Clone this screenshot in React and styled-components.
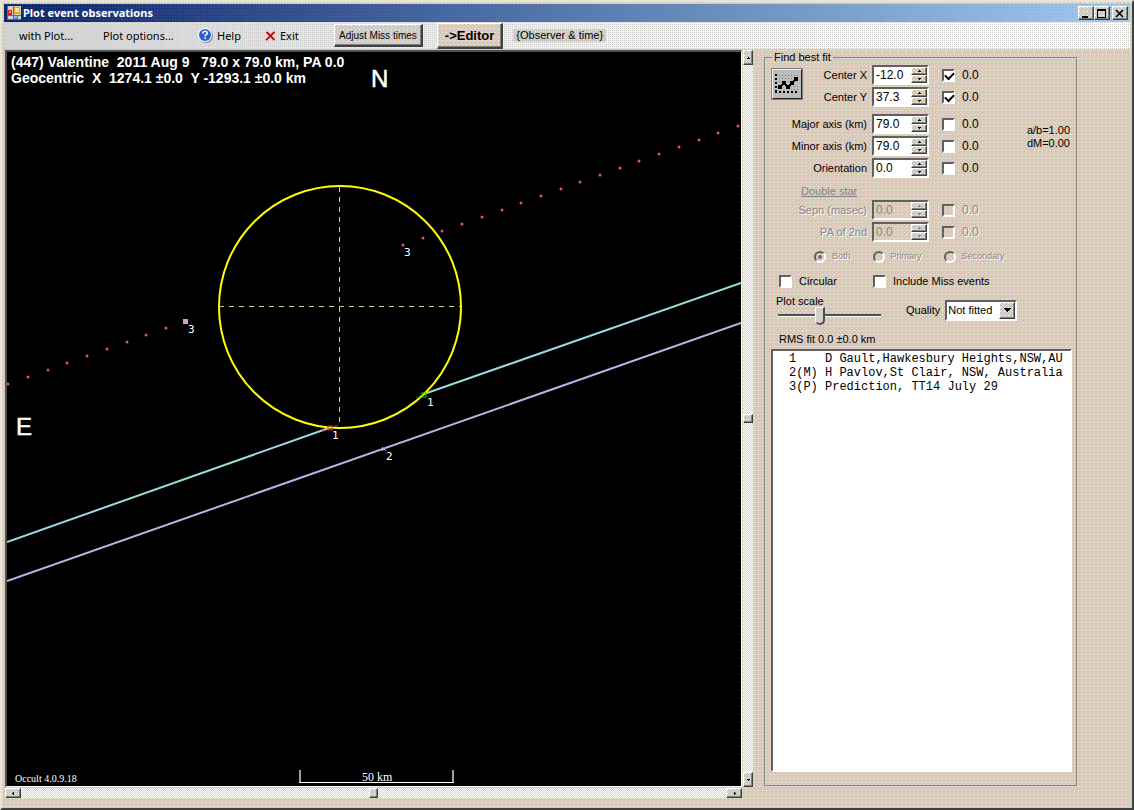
import React, { useState } from 'react';
import styled, { createGlobalStyle, css } from 'styled-components';

const observers = [
  '1    D Gault,Hawkesbury Heights,NSW,AU',
  '2(M) H Pavlov,St Clair, NSW, Australia',
  '3(P) Prediction, TT14 July 29',
];

const centerFields = [
  { id: 'centerX', label: 'Center X', value: '-12.0', checked: true },
  { id: 'centerY', label: 'Center Y', value: '37.3', checked: true },
];

const axisFields = [
  { id: 'major', label: 'Major axis (km)', value: '79.0' },
  { id: 'minor', label: 'Minor axis (km)', value: '79.0' },
  { id: 'orientation', label: 'Orientation', value: '0.0' },
];

const doubleFields = [
  { id: 'sepn', label: 'Sepn (masec)', value: '0.0', disabled: true },
  { id: 'pa', label: 'PA of 2nd', value: '0.0', disabled: true },
];

const dotsAlong = (x1, y1, x2, y2, steps) =>
  Array.from({ length: steps + 1 }, (_, i) => ({
    x: Math.round(x1 + ((x2 - x1) * i) / steps),
    y: Math.round(y1 + ((y2 - y1) * i) / steps),
  }));

const predictionDots = [...dotsAlong(403, 245, 738, 126, 17), ...dotsAlong(8, 384, 166, 328, 8)];

const FormIcon = () => (
  <svg width="14" height="14" viewBox="0 0 14 14" shapeRendering="crispEdges" aria-hidden="true">
    <rect width="14" height="14" fill="#d4d0c8" />
    <path d="M0 0h1v14h-1zM0 13h14v1h-14zM6 0h1v14h-1zM0 9h14v1h-14z" fill="#5a6a9a" />
    <rect x="1" y="4" width="4" height="5" fill="#cc2222" />
    <rect x="2" y="5" width="2" height="2" fill="#ff8877" />
    <rect x="7" y="1" width="6" height="7" fill="#e8a41c" />
    <rect x="8" y="2" width="4" height="4" fill="#ffe27a" />
    <rect x="6" y="9" width="5" height="4" fill="#3c78dc" />
    <rect x="7" y="10" width="3" height="2" fill="#8cbcff" />
  </svg>
);

const HelpIcon = () => (
  <svg width="15" height="15" viewBox="0 0 15 15" aria-hidden="true">
    <circle cx="8" cy="8" r="7" fill="#8a8a94" />
    <circle cx="7" cy="7" r="7" fill="#ffffff" />
    <circle cx="7" cy="7" r="6" fill="#2a5fd0" />
    <path d="M4.8 5.4c0-1.4 1-2.1 2.2-2.1s2.2.7 2.2 1.9c0 1.4-2 1.4-2 3" fill="none" stroke="#fff" strokeWidth="1.5" />
    <rect x="6.4" y="9.4" width="1.6" height="1.6" fill="#fff" />
  </svg>
);

const ExitIcon = () => (
  <svg width="11" height="10" viewBox="0 0 11 10" aria-hidden="true">
    <path d="M1.5 1l8 8M9.5 .8l-8.4 8.4" fill="none" stroke="#cc0000" strokeWidth="1.8" />
  </svg>
);

const FitIcon = () => (
  <svg width="28" height="28" viewBox="0 0 28 28" shapeRendering="crispEdges" aria-hidden="true">
    <path d="M3 4v18" stroke="#000" strokeWidth="2" strokeDasharray="2 2" />
    <path d="M2 22h23" stroke="#000" strokeWidth="2" strokeDasharray="2 2" />
    <path d="M6 5.5h19M6 8.5h15M6 11.5h10M18 16.5h7M18 19.5h7" stroke="#808080" strokeDasharray="1 2" />
    <path d="M5 15h4v4h-4zM9 11h4v4h-4zM13 15h4v4h-4zM17 11h4v4h-4zM21 7h4v4h-4z" fill="#000" />
    <path d="M8 14h2v2h-2zM12 14h2v2h-2zM16 14h2v2h-2zM20 10h2v2h-2z" fill="#000" />
  </svg>
);

const Arrow = ({ dir }) => {
  const paths = {
    up: 'M2 0h1v1h1v1h-3v-1h1z',
    down: 'M1 0h3v1h-1v1h-1v-1h-1z',
    left: 'M1 2h1v-1h1v3h-1v-1h-1z',
    right: 'M4 2h-1v-1h-1v3h1v-1h1z',
  };
  const flat = dir === 'up' || dir === 'down';
  return (
    <svg width="5" height={flat ? 2 : 5} viewBox={`0 0 5 ${flat ? 2 : 5}`} shapeRendering="crispEdges" aria-hidden="true">
      <path d={paths[dir]} fill="currentColor" />
    </svg>
  );
};

const Scroller = ({ vertical }) => (
  <ScrollTrack $vertical={vertical}>
    <ScrollButton $vertical={vertical} aria-label={vertical ? 'Scroll up' : 'Scroll left'}>
      <Arrow dir={vertical ? 'up' : 'left'} />
    </ScrollButton>
    <ScrollThumb />
    <ScrollButton $vertical={vertical} aria-label={vertical ? 'Scroll down' : 'Scroll right'}>
      <Arrow dir={vertical ? 'down' : 'right'} />
    </ScrollButton>
  </ScrollTrack>
);

const PlotChart = () => (
  <Chart viewBox="7 52 734 734" role="img" aria-label="Occultation plot">
    <text className="title" x="11" y="67">
      {'(447) Valentine  2011 Aug 9   79.0 x 79.0 km, PA 0.0'}
    </text>
    <text className="title" x="11" y="83">
      {'Geocentric  X  1274.1 ±0.0  Y -1293.1 ±0.0 km'}
    </text>
    <text className="compass" x="371" y="87">N</text>
    <text className="compass" x="16" y="435">E</text>

    {predictionDots.map(({ x, y }) => (
      <circle key={`${x}-${y}`} cx={x} cy={y} r="1.5" fill="#d6508c" />
    ))}
    <rect x="183" y="319" width="5" height="5" fill="#d39ad8" />

    <path d="M339 187V428M219 306H461" stroke="#d8cf80" strokeDasharray="5 5" shapeRendering="crispEdges" />
    <path d="M7 542L329 428M424 394L741 283" stroke="#9cd8dc" strokeWidth="2" />
    <path d="M7 581L741 323" stroke="#b0b8e6" strokeWidth="2" />
    <circle cx="340" cy="307" r="121" fill="none" stroke="#ffff00" strokeWidth="2" />
    <rect x="328" y="426" width="4" height="4" fill="none" stroke="#e03030" />
    <path d="M322 431h3M334 426l4-1" stroke="#e00000" />
    <rect x="422" y="393" width="4" height="4" fill="none" stroke="#00d000" />
    <path d="M416 397h4" stroke="#008800" />
    <path d="M382 447l4 4M386 447l-4 4" stroke="#b0b8e6" />

    <text className="chord" x="404" y="256">3</text>
    <text className="chord" x="188" y="333">3</text>
    <text className="chord" x="427" y="406">1</text>
    <text className="chord" x="332" y="439">1</text>
    <text className="chord" x="386" y="460">2</text>

    <text className="version" x="15" y="782">Occult 4.0.9.18</text>
    <path d="M300 770V782M453 770V782" stroke="#a0a0a0" strokeWidth="2" />
    <path d="M299 782.5H454" stroke="#ffffff" shapeRendering="crispEdges" />
    <text className="scale" x="362" y="781">50 km</text>
  </Chart>
);

const FieldRow = ({ field, labelWidth }) => {
  const [value, setValue] = useState(field.value);
  const [checked, setChecked] = useState(Boolean(field.checked));
  const { id, label, disabled } = field;

  const step = (delta) => setValue((v) => (Number(v) + delta).toFixed(1));

  return (
    <Row>
      <RowLabel htmlFor={id} $width={labelWidth} $disabled={disabled}>
        {label}
      </RowLabel>
      <Spinner>
        <input id={id} type="text" value={value} disabled={disabled} onChange={(e) => setValue(e.target.value)} />
        <div className="steps">
          <button type="button" aria-label={`${label} up`} disabled={disabled} onClick={() => step(0.1)}>
            <Arrow dir="up" />
          </button>
          <button type="button" aria-label={`${label} down`} disabled={disabled} onClick={() => step(-0.1)}>
            <Arrow dir="down" />
          </button>
        </div>
      </Spinner>
      <CheckLabel $disabled={disabled}>
        <CheckBox type="checkbox" checked={checked} disabled={disabled} onChange={() => setChecked(!checked)} />
        0.0
      </CheckLabel>
    </Row>
  );
};

const FitPanel = () => (
  <Panel>
    <legend>Find best fit</legend>
    <Block>
      <FitButton type="button" aria-label="Find best fit">
        <FitIcon />
      </FitButton>
      <Rows>
        {centerFields.map((field) => (
          <FieldRow key={field.id} field={field} labelWidth={64} />
        ))}
      </Rows>
    </Block>

    <Block $top={7}>
      <Rows>
        {axisFields.map((field) => (
          <FieldRow key={field.id} field={field} labelWidth={96} />
        ))}
      </Rows>
      <Notes>
        a/b=1.00
        <br />
        dM=0.00
      </Notes>
    </Block>

    <DoubleTitle>Double star</DoubleTitle>
    <Rows>
      {doubleFields.map((field) => (
        <FieldRow key={field.id} field={field} labelWidth={96} />
      ))}
    </Rows>

    <RadioRow>
      {['Both', 'Primary', 'Secondary'].map((name) => (
        <label key={name}>
          <Radio type="radio" name="star" disabled defaultChecked={name === 'Both'} />
          {name}
        </label>
      ))}
    </RadioRow>

    <OptionRow>
      <label>
        <CheckBox type="checkbox" />
        Circular
      </label>
      <label>
        <CheckBox type="checkbox" />
        Include Miss events
      </label>
    </OptionRow>

    <ScaleRow>
      <PlotScale>
        <label htmlFor="scale">Plot scale</label>
        <input id="scale" type="range" min="0" max="100" defaultValue="40" />
      </PlotScale>
      <label htmlFor="quality">Quality</label>
      <SelectBox>
        <select id="quality" defaultValue="Not fitted">
          <option>Not fitted</option>
        </select>
        <span className="drop">
          <svg width="7" height="4" viewBox="0 0 7 4" shapeRendering="crispEdges" aria-hidden="true">
            <path d="M0 0h7v1h-1v1h-1v1h-1v1h-1v-1h-1v-1h-1v-1h-1z" fill="#000" />
          </svg>
        </span>
      </SelectBox>
    </ScaleRow>

    <Rms>RMS fit 0.0 ±0.0 km</Rms>
    <ObserverList>
      {observers.map((line) => (
        <li key={line}>{line}</li>
      ))}
    </ObserverList>
  </Panel>
);

const App = () => {
  return (
    <>
      <GlobalStyle />
      <Window>
        <TitleBar>
          <FormIcon />
          <h1>Plot event observations</h1>
          <TitleButton type="button" aria-label="Minimize">
            <svg width="10" height="9" shapeRendering="crispEdges"><path d="M1 7h6v2h-6z" /></svg>
          </TitleButton>
          <TitleButton type="button" aria-label="Maximize">
            <svg width="10" height="9" shapeRendering="crispEdges">
              <path d="M0 0h9v9h-9zM1 2v6h7v-6z" fillRule="evenodd" />
            </svg>
          </TitleButton>
          <TitleButton type="button" aria-label="Close" $gap>
            <svg width="10" height="9"><path d="M1 1l7 7M8 1l-7 7" stroke="#000" strokeWidth="1.6" /></svg>
          </TitleButton>
        </TitleBar>

        <MenuBar>
          <MenuItem type="button" $width={84}>with Plot...</MenuItem>
          <MenuItem type="button" $width={95}>Plot options...</MenuItem>
          <MenuItem type="button" $width={67}>
            <HelpIcon />
            Help
          </MenuItem>
          <MenuItem type="button" $width={69}>
            <ExitIcon />
            Exit
          </MenuItem>
          <RaisedButton type="button">Adjust Miss times</RaisedButton>
          <RaisedButton type="button" $strong>
            {'->Editor'}
          </RaisedButton>
          <MenuNote>{'{Observer & time}'}</MenuNote>
        </MenuBar>

        <Body>
          <PlotArea>
            <PlotFrame>
              <PlotChart />
            </PlotFrame>
            <Scroller vertical />
            <Scroller />
          </PlotArea>
          <FitPanel />
        </Body>
      </Window>
    </>
  );
};

export default App;

const dither = css`
  background-color: #cecbc6;
  background-image: conic-gradient(at 1px 1px, transparent 270deg, #ffffcc 270deg),
    conic-gradient(at 1px 1px, transparent 270deg, #ffcccc 270deg);
  background-size: 4px 4px;
  background-position: 0 0, 2px 2px;
`;

const raised = css`
  border: 1px solid;
  border-color: #ffffff #404040 #404040 #ffffff;
  box-shadow: inset -1px -1px #808080;
`;

const sunken = css`
  border: 2px solid;
  border-color: #606060 #ffffff #ffffff #606060;
`;

const disabledText = css`
  color: #858585;
  text-shadow: 1px 1px #ffffff;
`;

const GlobalStyle = createGlobalStyle`
  * {
    box-sizing: border-box;
  }

  body {
    margin: 0;
    font-family: "Liberation Sans", Arial, sans-serif;
    font-size: 11px;
    line-height: 13px;
    color: #000000;
  }

  button, input, select {
    font: inherit;
    color: inherit;
    margin: 0;
    padding: 0;
    border-radius: 0;
  }
`;

const Window = styled.div`
  ${dither}
  display: flex;
  flex-direction: column;
  min-height: 100vh;
  padding: 2px;
  border: 2px solid;
  border-color: #e8e4dc #404040 #404040 #e8e4dc;
`;

const TitleBar = styled.header`
  display: flex;
  align-items: center;
  height: 18px;
  padding: 0 2px 0 3px;
  background-image: conic-gradient(at 1px 1px, transparent 270deg, rgba(90, 150, 190, 0.35) 270deg),
    linear-gradient(90deg, #0a246a, #a6caf0);
  background-size: 3px 3px, 100% 100%;

  h1 {
    flex: 1;
    margin: 0 0 0 2px;
    font-family: 'Noto Sans', sans-serif;
    font-size: 11px;
    font-weight: 700;
    line-height: 16px;
    color: #ffffff;
  }
`;

const TitleButton = styled.button`
  ${dither}
  ${raised}
  display: flex;
  align-items: center;
  justify-content: center;
  width: 16px;
  height: 14px;
  margin-left: ${({ $gap }) => ($gap ? '2px' : 0)};
`;

const MenuBar = styled.nav`
  display: flex;
  align-items: center;
  height: 27px;
  padding-left: 15px;
  background-image: conic-gradient(at 1px 1px, transparent 270deg, #cccccc 270deg),
    linear-gradient(90deg, #dad2ca, #f2f0ec 45%, #ffffff);
  background-size: 2px 2px, 100% 100%;
`;

const MenuItem = styled.button`
  display: flex;
  align-items: center;
  gap: 4px;
  flex: 0 0 ${({ $width }) => $width}px;
  border: 0;
  background: none;
  font-family: 'Noto Sans', sans-serif;
  white-space: nowrap;
`;

const RaisedButton = styled.button`
  ${dither}
  ${raised}
  height: 23px;
  margin-right: 14px;
  padding: 0 4px;
  border-width: 1px 2px 2px 1px;
  font-size: 10px;
  white-space: nowrap;
  ${({ $strong }) =>
    $strong &&
    css`
      height: 26px;
      margin-right: 10px;
      padding: 0 7px;
      font-size: 13px;
      font-weight: 700;
    `}
`;

const MenuNote = styled.span`
  ${dither}
  padding: 0 3px;
  white-space: nowrap;
`;

const Body = styled.main`
  display: flex;
  flex: 1;
  gap: 11px;
  padding: 1px 52px 8px 1px;
`;

const PlotArea = styled.section`
  flex: 1;
  display: grid;
  grid-template-columns: minmax(0, 1fr) 10px;
  grid-template-rows: minmax(0, 1fr) 10px;
  gap: 1px;
  min-width: 0;
`;

const PlotFrame = styled.div`
  display: flex;
  border: 2px solid;
  border-width: 2px 1px 1px 2px;
  border-color: #505050 #ffffff #ffffff #505050;
  background: #000000;
  min-height: 0;
`;

const Chart = styled.svg`
  width: 100%;
  height: 100%;

  text {
    fill: #ffffff;
    white-space: pre;
  }
  .title {
    font-size: 14px;
    font-weight: 700;
  }
  .compass {
    font-size: 24px;
    stroke: #ffffff;
    stroke-width: 0.5px;
  }
  .chord {
    font-family: 'DejaVu Sans Mono', monospace;
    font-size: 11px;
  }
  .version {
    font-family: 'Liberation Serif', serif;
    font-size: 10px;
  }
  .scale {
    font-family: 'Liberation Serif', serif;
    font-size: 12px;
  }
`;

const ScrollTrack = styled.div`
  display: flex;
  flex-direction: ${({ $vertical }) => ($vertical ? 'column' : 'row')};
  align-items: stretch;
  justify-content: space-between;
  background: conic-gradient(#ffffff 90deg, #d4d4d0 90deg 180deg, #ffffff 180deg 270deg, #d4d4d0 270deg) 0 0 / 2px 2px;
`;

const ScrollButton = styled.button`
  ${dither}
  ${raised}
  display: flex;
  align-items: center;
  justify-content: center;
  width: ${({ $vertical }) => ($vertical ? 10 : 16)}px;
  height: ${({ $vertical }) => ($vertical ? 15 : 10)}px;
`;

const ScrollThumb = styled.div`
  ${dither}
  ${raised}
  flex: 0 0 9px;
`;

const Panel = styled.fieldset`
  flex: 0 0 314px;
  display: flex;
  flex-direction: column;
  min-width: 0;
  margin: 1px 0 11px;
  padding: 1px 4px 13px 5px;
  border: 2px groove #d8d8d4;

  legend {
    margin-left: 1px;
    padding: 0 2px;
  }
`;

const Block = styled.div`
  display: flex;
  margin-top: ${({ $top }) => $top || 0}px;
`;

const FitButton = styled.button`
  display: flex;
  width: 32px;
  height: 32px;
  margin-top: 3px;
  background: #bcbcbc;
  border: 2px solid;
  border-color: #f0f0f0 #202020 #202020 #f0f0f0;
  outline: 1px solid #808080;
  outline-offset: -1px;
`;

const Rows = styled.div`
  display: flex;
  flex-direction: column;
  gap: 2px;
`;

const Row = styled.div`
  display: flex;
  align-items: center;
  height: 20px;
`;

const RowLabel = styled.label`
  flex: 0 0 ${({ $width }) => $width}px;
  margin-right: 5px;
  text-align: right;
  white-space: nowrap;
  ${({ $disabled }) => $disabled && disabledText}
`;

const Spinner = styled.div`
  ${sunken}
  display: flex;
  width: 57px;
  height: 20px;

  input {
    flex: 1;
    min-width: 0;
    padding-left: 2px;
    border: 0;
    outline: 0;
    background: #ffffff;
    font-size: 12px;

    &:disabled {
      background: transparent;
      color: #858585;
    }
  }

  .steps {
    display: flex;
    flex-direction: column;
    width: 16px;
  }

  button {
    ${dither}
    ${raised}
    flex: 1;
    display: flex;
    align-items: center;
    justify-content: center;

    &:disabled {
      color: #858585;
    }
  }
`;

const CheckLabel = styled.label`
  display: flex;
  align-items: center;
  gap: 7px;
  margin-left: 13px;
  font-size: 12px;
  ${({ $disabled }) => $disabled && disabledText}
`;

const CheckBox = styled.input`
  ${sunken}
  appearance: none;
  width: 13px;
  height: 13px;
  background: #ffffff;

  &:checked::after {
    content: '';
    display: block;
    width: 7px;
    height: 4px;
    margin: 1px;
    border: solid #000000;
    border-width: 0 0 2px 2px;
    transform: rotate(-45deg);
  }

  &:disabled {
    background: transparent;
  }
`;

const Notes = styled.p`
  flex: 1;
  margin: 10px 2px 0 0;
  text-align: right;
`;

const DoubleTitle = styled.h2`
  margin: 7px 0 2px 30px;
  font-size: 11px;
  font-weight: 400;
  color: #858585;
  text-decoration: underline;
`;

const RadioRow = styled.div`
  display: flex;
  gap: 22px;
  margin: 8px 0 0 43px;
  font-size: 9px;

  label {
    ${disabledText}
    display: flex;
    align-items: center;
    gap: 6px;
  }
`;

const Radio = styled.input`
  appearance: none;
  display: flex;
  align-items: center;
  justify-content: center;
  width: 12px;
  height: 12px;
  border: 2px solid;
  border-color: #606060 #ffffff #ffffff #606060;
  && {
    border-radius: 50%;
  }

  &:checked::after {
    content: '';
    width: 4px;
    height: 4px;
    border-radius: 50%;
    background: #707070;
  }
`;

const OptionRow = styled.div`
  display: grid;
  grid-template-columns: 94px 1fr;
  margin: 12px 0 0 8px;

  label {
    display: flex;
    align-items: center;
    gap: 7px;
  }
`;

const ScaleRow = styled.div`
  display: flex;
  align-items: center;
  height: 32px;
  margin: 6px 0 7px;
`;

const PlotScale = styled.div`
  display: flex;
  flex-direction: column;
  width: 110px;
  margin-right: 25px;

  label {
    padding-left: 5px;
    line-height: 12px;
  }

  input {
    appearance: none;
    width: 103px;
    height: 18px;
    margin-left: 7px;
    background: linear-gradient(#505050 2px, #ffffff 2px) 0 7px / 100% 3px no-repeat;

    &::-webkit-slider-thumb {
      appearance: none;
      width: 10px;
      height: 18px;
      border: 1px solid;
      border-width: 1px 2px 2px 1px;
      border-color: #ffffff #505050 #505050 #ffffff;
      border-radius: 0 0 5px 5px;
      background: #d4d0c8;
    }
  }
`;

const SelectBox = styled.div`
  ${sunken}
  position: relative;
  width: 72px;
  height: 21px;
  margin-left: 5px;

  select {
    appearance: none;
    display: block;
    width: 100%;
    height: 100%;
    padding-left: 1px;
    border: 0;
    outline: 0;
    background: #ffffff;
  }

  .drop {
    ${dither}
    ${raised}
    position: absolute;
    top: 0;
    right: 0;
    display: flex;
    align-items: center;
    justify-content: center;
    width: 16px;
    height: 17px;
    pointer-events: none;
  }
`;

const Rms = styled.p`
  margin: 0 0 3px 8px;
`;

const ObserverList = styled.ul`
  ${sunken}
  flex: 1;
  margin: 0;
  padding: 1px 0 0 16px;
  list-style: none;
  background: #ffffff;
  font-family: 'Liberation Mono', 'Courier New', monospace;
  font-size: 12px;
  line-height: 14px;
  white-space: pre;
`;
